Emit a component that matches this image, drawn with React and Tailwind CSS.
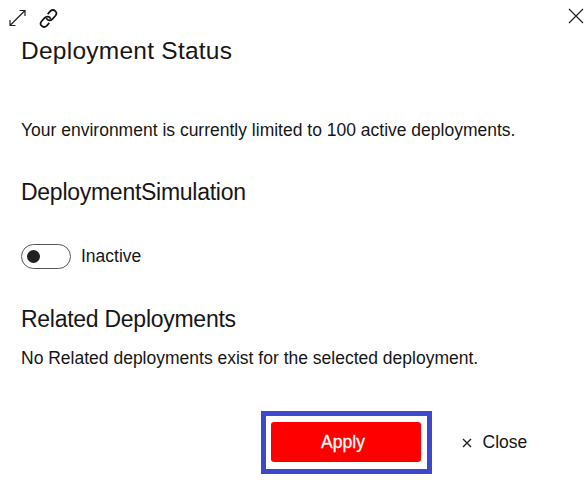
export default function App() {
  return (
    <main className="h-[501px] w-[587px] overflow-hidden bg-white font-['Liberation_Sans',Arial,sans-serif] text-[#161616]">
      <header className="flex h-9 items-center justify-between pl-2 pr-[3px]">
        <div className="flex items-center gap-3">
          <svg width="19" height="19" viewBox="0 0 19 19" fill="none" stroke="#222" strokeWidth="1.2"><path d="M2 16.5 17 1.5M11.5 1.5H17V7M2 11v5.5h5.5" /></svg>
          <svg width="19" height="19" viewBox="0 0 19 19" fill="none" stroke="#111" strokeWidth="1.7"><path d="M8.7 5.1 11.3 2.2C14.9-.9 19.3 3.3 16.4 6.8L13.4 10.1C11.5 12 8.4 11.8 7.3 9.2M10.3 13.9 7.7 16.8C4.1 19.9-.3 15.7 2.6 12.2L5.6 8.9C7.5 7 10.6 7.2 11.7 9.8" /></svg>
        </div>
        <svg className="mb-[4px]" width="16" height="16" viewBox="0 0 16 16" stroke="#222" strokeWidth="1.2"><path d="m1 1 14 14M15 1 1 15" /></svg>
      </header>
      <section className="px-[21px]">
        <h1 className="text-[24.5px] leading-[30px] tracking-[0.25px]">Deployment Status</h1>
        <p className="mt-[52px] text-[17.5px] leading-6">Your environment is currently limited to 100 active deployments.</p>
        <h2 className="mt-[35px] text-[23px] leading-[30px] tracking-[-0.27px]">DeploymentSimulation</h2>
        <div className="mt-[37px] flex h-[25px] items-center gap-[10px]">
          <button role="switch" aria-checked="false" className="flex h-[25px] w-[50px] items-center rounded-full border border-[#555] pl-[5px]"><span className="size-[13px] rounded-full bg-[#242021]" /></button>
          <span className="text-[17.5px]">Inactive</span>
        </div>
        <h2 className="mt-[35px] text-[23px] leading-[30px] tracking-[-0.27px]">Related Deployments</h2>
        <p className="mt-[12px] text-[17.5px] leading-6">No Related deployments exist for the selected deployment.</p>
      </section>
      <footer className="mt-[41px] flex items-center pl-[261px]">
        <div className="h-[63px] w-[171px] border-[5px] border-[#3f48cc] pl-[5px] pt-[6px]">
          <button className="h-[40px] w-[150px] rounded-[3px] bg-[#ff0000] pr-[6px] text-[17.5px] text-white [-webkit-text-stroke:0.3px_white]">Apply</button>
        </div>
        <button className="ml-[30px] flex items-center gap-[10.5px] text-[17.5px]"><svg width="10" height="10" viewBox="0 0 10 10" stroke="#222" strokeWidth="1.4"><path d="m1 1 8 8M9 1 1 9" /></svg>Close</button>
      </footer>
    </main>
  );
}
